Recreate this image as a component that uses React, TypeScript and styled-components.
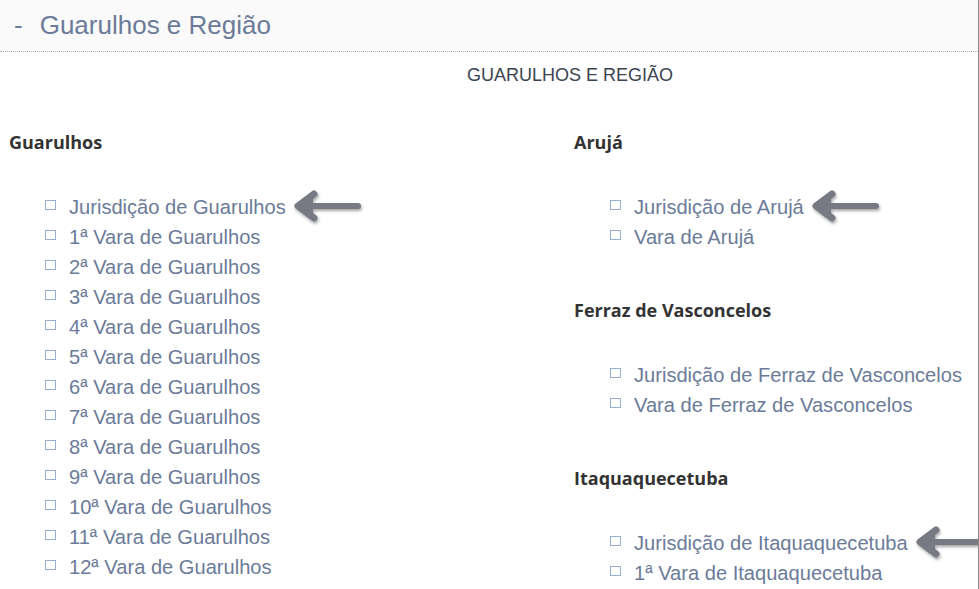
import React from 'react'
import styled, { createGlobalStyle } from 'styled-components'

const GlobalStyle = createGlobalStyle`
  html, body {
    margin: 0;
    padding: 0;
    background: #fff;
  }
  body {
    font-family: 'Liberation Sans', Arial, sans-serif;
    overflow: hidden;
  }
`

type Section = {
  title: string
  items: string[]
  marked?: boolean
}

const left: Section[] = [
  {
    title: 'Guarulhos',
    marked: true,
    items: [
      'Jurisdição de Guarulhos',
      ...Array.from({ length: 13 }, (_, i) => `${i + 1}ª Vara de Guarulhos`),
    ],
  },
]

const right: Section[] = [
  { title: 'Arujá', marked: true, items: ['Jurisdição de Arujá', 'Vara de Arujá'] },
  {
    title: 'Ferraz de Vasconcelos',
    items: ['Jurisdição de Ferraz de Vasconcelos', 'Vara de Ferraz de Vasconcelos'],
  },
  {
    title: 'Itaquaquecetuba',
    marked: true,
    items: ['Jurisdição de Itaquaquecetuba', '1ª Vara de Itaquaquecetuba'],
  },
]

const Page = styled.div`
  width: 978px;
  height: 589px;
  border-right: 1px solid #8a8a8a;
  overflow: hidden;
`

const Header = styled.div`
  height: 51px;
  background: #fafafa;
  border-bottom: 1px dotted #b0b0b0;
  display: flex;
  align-items: center;
  padding-left: 14px;
  color: #6b7b99;
  font-size: 26px;
`

const Dash = styled.span`
  margin-right: 17px;
`

const Caption = styled.div`
  padding: 13px 0 0 467px;
  height: 22px;
  font-size: 18px;
  color: #3a4450;
`

const Columns = styled.div`
  display: grid;
  grid-template-columns: 565px 1fr;
  padding-top: 40px;
`

const Column = styled.div`
  padding-left: 9px;
  display: flex;
  flex-direction: column;
  gap: 43px;
`

const Title = styled.h3`
  margin: 0;
  font-family: 'Open Sans', 'Noto Sans', sans-serif;
  font-weight: 700;
  font-size: 18px;
  line-height: 30px;
  color: #333;
`

const List = styled.ul`
  list-style: none;
  margin: 35px 0 0;
  padding: 0 0 0 36px;
`

const Item = styled.li`
  height: 30px;
  display: flex;
  align-items: center;
  font-size: 20.1px;
  color: #6b7b99;
  white-space: nowrap;
`

const BulletIcon = styled.svg`
  margin-right: 13px;
  flex-shrink: 0;
  position: relative;
  top: -2px;
`

const ArrowMark = styled.svg`
  margin-left: 8px;
  flex-shrink: 0;
  overflow: visible;
`

function Bullet() {
  return (
    <BulletIcon width="11" height="10" viewBox="0 0 11 10">
      <rect x="0.5" y="0.5" width="10" height="9" fill="none" stroke="#2f5e9e" strokeDasharray="1 1" />
    </BulletIcon>
  )
}

function Arrow() {
  return (
    <ArrowMark width="68" height="30" viewBox="0 0 68 30">
      <defs>
        <filter id="sh" x="-20%" y="-40%" width="140%" height="180%">
          <feDropShadow dx="1" dy="2" stdDeviation="1.6" floodColor="#000" floodOpacity="0.35" />
        </filter>
      </defs>
      <g filter="url(#sh)" stroke="#777a82" strokeLinecap="round" strokeLinejoin="round" fill="none">
        <path d="M8 14 L64 14" strokeWidth="6" />
        <path d="M20 2 L4 14 L20 26" strokeWidth="7" />
        <path d="M7 14 L18 7 L18 21 Z" fill="#777a82" strokeWidth="2" />
      </g>
    </ArrowMark>
  )
}

function SectionBlock({ section }: { section: Section }) {
  return (
    <div>
      <Title>{section.title}</Title>
      <List>
        {section.items.map((item, i) => (
          <Item key={item}>
            <Bullet />
            {item}
            {section.marked && i === 0 && <Arrow />}
          </Item>
        ))}
      </List>
    </div>
  )
}

export default function App() {
  return (
    <Page>
      <GlobalStyle />
      <Header>
        <Dash>-</Dash>
        Guarulhos e Região
      </Header>
      <Caption>GUARULHOS E REGIÃO</Caption>
      <Columns>
        <Column>
          {left.map(s => (
            <SectionBlock key={s.title} section={s} />
          ))}
        </Column>
        <Column>
          {right.map(s => (
            <SectionBlock key={s.title} section={s} />
          ))}
        </Column>
      </Columns>
    </Page>
  )
}
